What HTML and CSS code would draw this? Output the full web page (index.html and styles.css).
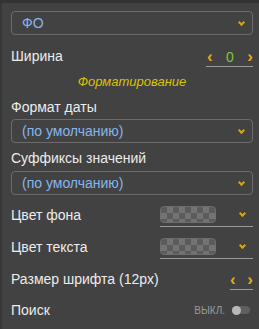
FILE: index.html
```html
<!DOCTYPE html>
<html lang="ru">
<head>
    <meta charset="UTF-8">
    <meta name="viewport" content="width=device-width, initial-scale=1.0">
    <title>Настройки колонки</title>
    <link rel="stylesheet" href="styles.css">
</head>
<body>
    <div class="panel">
        <div class="select"><span class="select-value">ФО</span><span class="chevron"></span></div>

        <div class="row row-width">
            <span class="label">Ширина</span>
            <div class="stepper stepper-wide">
                <span class="arrow">&lsaquo;</span>
                <span class="stepper-value">0</span>
                <span class="arrow">&rsaquo;</span>
            </div>
        </div>

        <div class="section-title">Форматирование</div>

        <div class="label field-label">Формат даты</div>
        <div class="select select-small"><span class="select-value">(по умолчанию)</span><span class="chevron"></span></div>

        <div class="label field-label">Суффиксы значений</div>
        <div class="select select-small"><span class="select-value">(по умолчанию)</span><span class="chevron"></span></div>

        <div class="row row-color">
            <span class="label">Цвет фона</span>
            <div class="color-pick">
                <span class="swatch"></span>
                <span class="chevron"></span>
            </div>
        </div>

        <div class="row row-color">
            <span class="label">Цвет текста</span>
            <div class="color-pick">
                <span class="swatch"></span>
                <span class="chevron"></span>
            </div>
        </div>

        <div class="row row-font">
            <span class="label">Размер шрифта (12px)</span>
            <div class="stepper stepper-narrow">
                <span class="arrow">&lsaquo;</span>
                <span class="arrow">&rsaquo;</span>
            </div>
        </div>

        <div class="row row-toggle">
            <span class="label">Поиск</span>
            <div class="toggle-wrap">
                <span class="toggle-text">ВЫКЛ.</span>
                <span class="toggle"><span class="knob"></span></span>
            </div>
        </div>
    </div>
</body>
</html>
```

FILE: styles.css
```css
* {
    margin: 0;
    padding: 0;
    box-sizing: border-box;
    font-family: "Liberation Sans", Arial, sans-serif;
}

body {
    background: #424242;
    width: 259px;
    height: 329px;
    overflow: hidden;
}

.panel {
    height: 329px;
    border-top: 3px solid #333333;
    border-left: 2px solid #363636;
    padding: 8px 6px 0 9px;
    color: #ececec;
    font-size: 14px;
}

.select {
    height: 24px;
    border: 1px solid #6b6b6b;
    border-radius: 4px;
    display: flex;
    align-items: center;
    justify-content: space-between;
    padding: 0 8px 0 10px;
}

.select-value {
    color: #86b5ee;
    font-size: 14px;
}

.chevron {
    width: 5px;
    height: 5px;
    border-right: 2px solid #d3a520;
    border-bottom: 2px solid #d3a520;
    transform: rotate(45deg);
    margin-top: -2px;
}

.row {
    display: flex;
    align-items: center;
    justify-content: space-between;
}

.label {
    color: #ececec;
    font-size: 14px;
}

.row-width {
    margin-top: 10px;
    height: 22px;
}

.stepper {
    display: flex;
    align-items: center;
    justify-content: space-between;
    border-bottom: 1px solid #9a9a9a;
    height: 22px;
    padding-top: 2px;
}

.stepper-wide {
    width: 47px;
    padding-left: 1px;
}

.stepper-narrow {
    width: 23px;
}

.arrow {
    color: #e2ab1c;
    font-size: 17px;
    font-weight: bold;
    line-height: 17px;
}

.stepper-value {
    color: #7cc83a;
    font-size: 14px;
}

.section-title {
    text-align: center;
    color: #d9c300;
    font-style: italic;
    font-size: 13px;
    margin-top: 5px;
    height: 20px;
    line-height: 20px;
}

.field-label {
    margin-top: 7px;
    height: 16px;
    line-height: 16px;
    margin-bottom: 4px;
}

.select-small + .field-label {
    margin-bottom: 5px;
}

.row-color {
    margin-top: 8px;
    height: 24px;
}

.color-pick {
    width: 93px;
    height: 24px;
    border-bottom: 1px solid #9a9a9a;
    display: flex;
    align-items: center;
    justify-content: space-between;
    padding-right: 8px;
}

.swatch {
    width: 56px;
    height: 17px;
    border-radius: 4px;
    border: 1px solid #6e6e6e;
    background-color: #5b5b5b;
    background-image:
        linear-gradient(45deg, #737373 25%, transparent 25%, transparent 75%, #737373 75%),
        linear-gradient(45deg, #737373 25%, transparent 25%, transparent 75%, #737373 75%);
    background-size: 12px 12px;
    background-position: 0 0, 6px 6px;
}

.row-font {
    margin-top: 9px;
    height: 22px;
}

.row-toggle {
    margin-top: 10px;
    height: 20px;
}

.toggle-wrap {
    display: flex;
    align-items: center;
    gap: 7px;
    padding-right: 3px;
}

.toggle-text {
    color: #9a9a9a;
    font-size: 10px;
}

.toggle {
    width: 18px;
    height: 8px;
    border-radius: 4px;
    background: #5f5f5f;
    display: flex;
    align-items: center;
}

.knob {
    width: 9px;
    height: 9px;
    border-radius: 50%;
    background: #b8b8b8;
}
```
